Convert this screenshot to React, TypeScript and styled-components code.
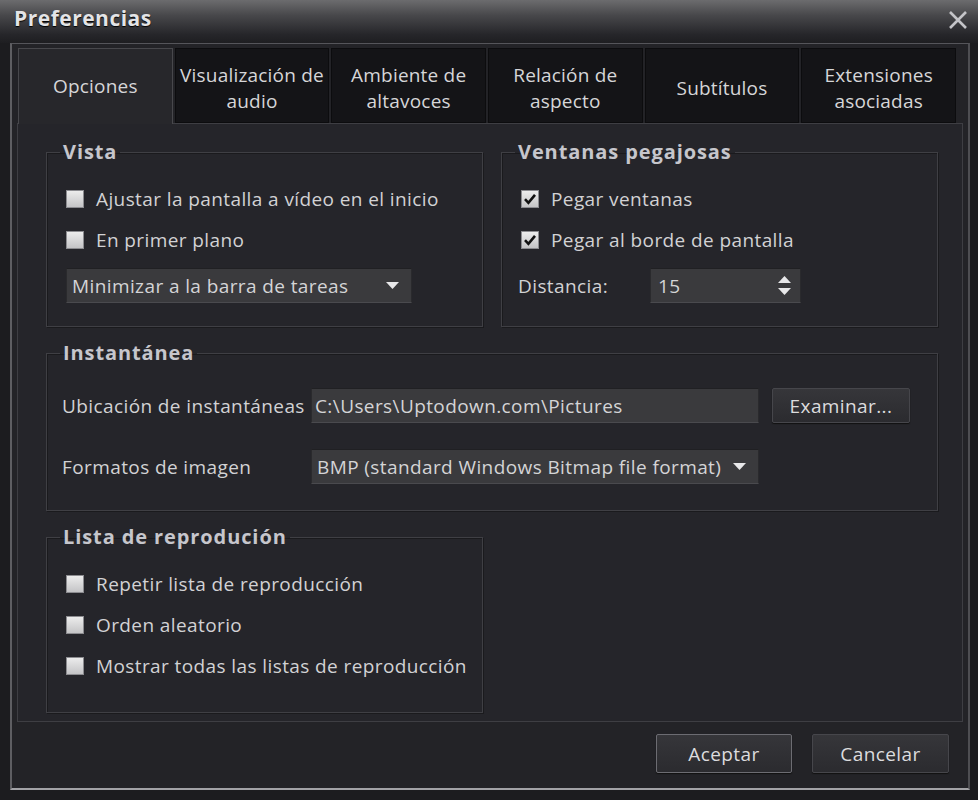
import React from 'react'
import styled, { createGlobalStyle } from 'styled-components'

const GlobalStyle = createGlobalStyle`
    html, body {
        margin: 0;
        padding: 0;
        background: #1c1c1f;
    }
    body {
        font-family: "Open Sans", "Noto Sans", sans-serif;
        color: #d2d2d4;
    }
    * { box-sizing: border-box; }
`

const Window = styled.div`
    width: 978px;
    height: 800px;
    display: flex;
    flex-direction: column;
    background: #1c1c1f;
    overflow: hidden;
`

const TitleBar = styled.div`
    height: 43px;
    flex: none;
    display: flex;
    align-items: flex-start;
    justify-content: space-between;
    padding: 3px 9px 0 14px;
    background: linear-gradient(#6c6c6e 0%, #48484b 35%, #26262a 80%, #1e1e21 100%);
`

const Title = styled.h1`
    margin: 0;
    font-size: 21px;
    letter-spacing: 0.5px;
    line-height: 30px;
    font-weight: 700;
    color: #e4e4e6;
    text-shadow: 0 1px 1px #000;
`

const Close = styled.button`
    all: unset;
    width: 22px;
    height: 22px;
    margin-top: 6px;
    display: flex;
    align-items: center;
    justify-content: center;
`

const Frame = styled.div`
    margin: 0 8px 0 10px;
    height: 747px;
    display: flex;
    flex-direction: column;
    background: #232327;
    border-top: 1px solid #55555a;
    border-left: 2px solid #5e5e62;
    border-right: 2px solid #4e4e52;
    border-bottom: 2px solid #a2a2a6;
    padding: 4px 0 0 5px;
`

const TabRow = styled.div`
    width: 938px;
    height: 75px;
    margin-left: 1px;
    display: flex;
    gap: 2px;
`

const Tab = styled.div<{ $active?: boolean }>`
    flex: 1;
    display: flex;
    align-items: center;
    justify-content: center;
    text-align: center;
    font-size: 19px;
    letter-spacing: 0.2px;
    line-height: 26px;
    color: #d6d6d8;
    background: ${p => (p.$active ? '#27272b' : '#141417')};
    border: 1px solid ${p => (p.$active ? '#48484c' : '#0c0c0e')};
    border-bottom: ${p => (p.$active ? 'none' : '1px solid #0c0c0e')};
    margin-bottom: ${p => (p.$active ? '-1px' : '0')};
    position: relative;
    z-index: ${p => (p.$active ? 1 : 0)};
    padding: ${p => (p.$active ? '0 0 2px' : '5px 0 0')};
`

const TabText = styled.span`
    max-width: 146px;
`

const Panel = styled.div`
    width: 946px;
    height: 599px;
    background: #25252a;
    border: 1px solid #3e3e43;
    padding: 16px 0 0 28px;
    display: grid;
    grid-template-columns: 437px 437px;
    grid-template-rows: 187px 170px 188px;
    column-gap: 18px;
    row-gap: 14px;
    align-content: start;
`

const Group = styled.fieldset<{ $wide?: boolean; $pad?: string }>`
    margin: 0;
    min-width: 0;
    grid-column: ${p => (p.$wide ? '1 / span 2' : 'auto')};
    border: 1px solid #3f3f44;
    box-shadow: inset 1px 1px 0 #1a1a1d, 1px 1px 0 #1a1a1d;
    padding: ${p => p.$pad ?? '14px 0 0 19px'};
`

const Legend = styled.legend<{ $shift?: number }>`
    margin-left: ${p => p.$shift ?? -6}px;
    padding: 0 3px;
    font-size: 20px;
    letter-spacing: 0.9px;
    line-height: 24px;
    font-weight: 700;
    color: #c6c6cc;
`

const CheckRow = styled.label`
    height: 41px;
    display: flex;
    align-items: center;
    gap: 12px;
    font-size: 19px;
    letter-spacing: 0.4px;
    color: #d2d2d4;
`

const Box = styled.span`
    width: 18px;
    height: 18px;
    flex: none;
    display: flex;
    align-items: center;
    justify-content: center;
    background: linear-gradient(#ececec, #c4c4c6);
    border: 1px solid #8c8c90;
`

const Field = styled.div<{ $w: number; $pl?: number }>`
    width: ${p => p.$w}px;
    height: 35px;
    flex: none;
    display: flex;
    align-items: center;
    justify-content: space-between;
    padding: 0 12px 0 ${p => p.$pl ?? 5}px;
    background: #3a3a3d;
    border: 1px solid #2a2a2d;
    border-top-color: #202023;
    border-bottom-color: #4a4a4e;
    font-size: 19px;
    letter-spacing: 0.4px;
    color: #d4d4d6;
    white-space: nowrap;
    overflow: hidden;
`

const Dropdown = styled(Field)`
    margin-top: 8px;
`

const FieldRow = styled.div<{ $gap?: number }>`
    display: flex;
    align-items: center;
    margin-top: ${p => p.$gap ?? 0}px;
`

const FieldLabel = styled.span<{ $w: number; $ml?: number }>`
    width: ${p => p.$w}px;
    margin-left: ${p => p.$ml ?? 0}px;
    flex: none;
    font-size: 19px;
    letter-spacing: 0.4px;
    color: #d2d2d4;
    white-space: nowrap;
`

const Button = styled.button<{ $focus?: boolean; $w: number; $h: number; $ml?: number }>`
    width: ${p => p.$w}px;
    height: ${p => p.$h}px;
    margin-left: ${p => p.$ml ?? 0}px;
    flex: none;
    font-family: inherit;
    font-size: 19px;
    letter-spacing: 0.4px;
    color: #dcdcde;
    background: linear-gradient(#36363a, #2b2b2f);
    border: 1px solid ${p => (p.$focus ? '#6c6c72' : '#46464b')};
    border-radius: 2px;
    box-shadow: 0 1px 1px #111;
    padding: 0;
`

const Footer = styled.div`
    flex: 1;
    display: flex;
    justify-content: flex-end;
    align-items: flex-start;
    gap: 20px;
    padding: 12px 19px 0 0;
`

const Spin = styled.span`
    display: flex;
    flex-direction: column;
    gap: 5px;
    margin-right: -3px;
`

const Arrow = ({ up }: { up?: boolean }) => (
    <svg width="13" height="7" viewBox="0 0 13 7">
        <path d={up ? 'M0 7 L6.5 0 L13 7 Z' : 'M0 0 L13 0 L6.5 7 Z'} fill="#e8e8ea" />
    </svg>
)

const Check = ({ checked, label }: { checked?: boolean; label: string }) => (
    <CheckRow>
        <Box>
            {checked && (
                <svg width="14" height="14" viewBox="0 0 14 14">
                    <path d="M2 7.2 L5.4 10.8 L12 2.8" fill="none" stroke="#111" strokeWidth="2.6" />
                </svg>
            )}
        </Box>
        {label}
    </CheckRow>
)

const tabs = [
    'Opciones',
    'Visualización de audio',
    'Ambiente de altavoces',
    'Relación de aspecto',
    'Subtítulos',
    'Extensiones asociadas',
]

const App = () => {
    return (
        <>
            <GlobalStyle />
            <Window>
                <TitleBar>
                    <Title>Preferencias</Title>
                    <Close aria-label="Cerrar">
                        <svg width="20" height="20" viewBox="0 0 20 20">
                            <path d="M2 2 L18 18 M18 2 L2 18" stroke="#c4c4c8" strokeWidth="2.6" />
                        </svg>
                    </Close>
                </TitleBar>
                <Frame>
                    <TabRow>
                        {tabs.map((t, i) => (
                            <Tab key={t} $active={i === 0}>
                                <TabText>{t}</TabText>
                            </Tab>
                        ))}
                    </TabRow>
                    <Panel>
                        <Group>
                            <Legend>Vista</Legend>
                            <Check label="Ajustar la pantalla a vídeo en el inicio" />
                            <Check label="En primer plano" />
                            <Dropdown $w={346}>
                                Minimizar a la barra de tareas
                                <Arrow />
                            </Dropdown>
                        </Group>
                        <Group>
                            <Legend>Ventanas pegajosas</Legend>
                            <Check checked label="Pegar ventanas" />
                            <Check checked label="Pegar al borde de pantalla" />
                            <FieldRow $gap={8}>
                                <FieldLabel $w={132} $ml={-3}>Distancia:</FieldLabel>
                                <Field $w={151} $pl={7}>
                                    15
                                    <Spin>
                                        <Arrow up />
                                        <Arrow />
                                    </Spin>
                                </Field>
                            </FieldRow>
                        </Group>
                        <Group $wide $pad="23px 0 0 15px">
                            <Legend $shift={-2}>Instantánea</Legend>
                            <FieldRow>
                                <FieldLabel $w={249}>Ubicación de instantáneas</FieldLabel>
                                <Field $w={448} $pl={3}>C:\Users\Uptodown.com\Pictures</Field>
                                <Button $w={138} $h={35} $ml={13}>Examinar...</Button>
                            </FieldRow>
                            <FieldRow $gap={26}>
                                <FieldLabel $w={249}>Formatos de imagen</FieldLabel>
                                <Field $w={448}>
                                    BMP (standard Windows Bitmap file format)
                                    <Arrow />
                                </Field>
                            </FieldRow>
                        </Group>
                        <Group>
                            <Legend>Lista de reprodución</Legend>
                            <Check label="Repetir lista de reproducción" />
                            <Check label="Orden aleatorio" />
                            <Check label="Mostrar todas las listas de reproducción" />
                        </Group>
                    </Panel>
                    <Footer>
                        <Button $focus $w={136} $h={39}>Aceptar</Button>
                        <Button $w={137} $h={39}>Cancelar</Button>
                    </Footer>
                </Frame>
            </Window>
        </>
    )
}

export default App
